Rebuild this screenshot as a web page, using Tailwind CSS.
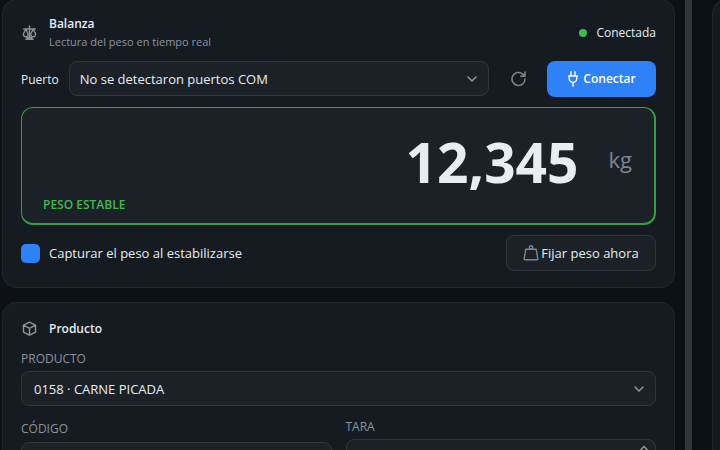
<!DOCTYPE html>
<html lang="es">
<head>
    <meta charset="UTF-8">
    <meta name="viewport" content="width=device-width, initial-scale=1.0">
    <title>Balanza</title>
    <script src="https://cdn.jsdelivr.net/npm/@tailwindcss/browser@4"></script>
</head>
<body class="bg-[#0d1117] text-[#e6edf3] font-['Open_Sans','Noto_Sans',sans-serif] text-[13px] leading-[18px]">
    <div class="flex h-screen overflow-hidden">
        <!-- Main column -->
        <main class="flex-1 min-w-0 flex flex-col gap-3.5 pl-0.5 pr-2.5 -mt-px">
            <!-- Balanza -->
            <section class="shrink-0 flex flex-col bg-[#161b22] border border-[#21262d] rounded-[14px] px-[18px] pt-[15px] pb-4">
                <header class="flex items-center justify-between">
                    <div class="flex items-center gap-3">
                        <svg class="size-4 text-[#8b949e]" viewBox="0 0 16 16" fill="none" stroke="currentColor" stroke-width="1.4" stroke-linecap="round" stroke-linejoin="round">
                            <path d="M8.5 1v12M2.8 4h11.4M5 14.2h7M6 13l2.5-1.2L11 13"/>
                            <path d="M4.8 4.2 2.5 8.6c-.4 2 .8 3.2 2.3 3.2s2.7-1.200 2.300-3.200zM12.200 4.200 9.900 8.600c-.4 2 .8 3.200 2.300 3.200s2.700-1.200 2.300-3.200z"/>
                        </svg>
                        <div>
                            <h2 class="text-xs leading-[18px] font-semibold">Balanza</h2>
                            <p class="text-[11px] leading-[18px] text-[#8b949e]">Lectura del peso en tiempo real</p>
                        </div>
                    </div>
                    <div class="flex items-center gap-[9px]">
                        <span class="size-2 rounded-full bg-[#3fb950]"></span>
                        <span class="text-xs leading-[18px]">Conectada</span>
                    </div>
                </header>

                <div class="flex items-start mt-2.5">
                    <label for="port" class="mr-2.5 text-xs leading-[38px] h-9">Puerto</label>
                    <div class="relative flex-1">
                        <select id="port" class="block w-full h-[35px] appearance-none bg-[#1c2128] border border-[#30363d] rounded-lg pl-2.5 pr-8">
                            <option>No se detectaron puertos COM</option>
                        </select>
                        <svg class="absolute right-[11px] top-3 w-3 h-3 text-[#8b949e] pointer-events-none" viewBox="0 0 12 12" fill="none" stroke="currentColor" stroke-width="1.6" stroke-linecap="round" stroke-linejoin="round"><path d="M2 4l4 4 4-4"/></svg>
                    </div>
                    <button type="button" aria-label="Actualizar puertos" class="w-[58px] h-9 flex items-center justify-center text-[#7d8590]">
                        <svg class="size-4" viewBox="0 0 16 16" fill="none" stroke="currentColor" stroke-width="1.5" stroke-linecap="round" stroke-linejoin="round"><path d="M15 8A6.5 6.5 0 1 1 12.800 3.100L15 5M15 1v4.200h-4.200"/></svg>
                    </button>
                    <button type="button" class="w-[109px] h-9 flex items-center justify-center gap-1 rounded-lg bg-[#2f81f7] text-white text-xs font-semibold">
                        <svg class="w-3 h-4" viewBox="0 0 12 16" fill="none" stroke="currentColor" stroke-width="1.4" stroke-linecap="round" stroke-linejoin="round"><path d="M4 .8v4M8 .8v4M1.500 5h9M2.300 5v2.700a3.700 3.700 0 0 0 7.400 0V5M6 11.500v3.800"/></svg>
                        Conectar
                    </button>
                </div>

                <!-- Weight display -->
                <div class="mt-2.5 h-[118px] flex flex-col bg-[#1c2128] border-t border-l border-r-2 border-b-2 border-[#369d46] rounded-xl px-[21px] pb-[9px]">
                    <div class="flex-1 flex items-center justify-end gap-[30px] pt-5">
                        <output class="text-[55px] leading-[64px] font-bold">12,345</output>
                        <span class="text-[22px] leading-7 pb-1.5 pr-px text-[#7d8590]">kg</span>
                    </div>
                    <p class="text-xs leading-[18px] font-semibold text-[#3fb950]">PESO ESTABLE</p>
                </div>

                <div class="flex items-center justify-between mt-2.5">
                    <label class="flex items-center gap-[9px]">
                        <input type="checkbox" checked class="appearance-none size-[19px] rounded-[5px] bg-[#2f81f7]">
                        Capturar el peso al estabilizarse
                    </label>
                    <button type="button" class="w-[150px] h-9 flex items-center justify-center gap-0.5 bg-[#1c2128] border border-[#30363d] rounded-lg">
                        <svg class="size-4 text-[#7d8590]" viewBox="0 0 16 16" fill="none" stroke="currentColor" stroke-width="1.4" stroke-linejoin="round"><circle cx="8" cy="2.4" r="1.7"/><path d="M2.800 4.300h10.400l1.600 9.400q.1 1-.9 1H2.100q-1 0-.9-1z"/></svg>
                        Fijar peso ahora
                    </button>
                </div>
            </section>

            <!-- Producto -->
            <section class="shrink-0 flex flex-col bg-[#161b22] border border-[#21262d] rounded-[14px] px-[18px] pt-[15px] pb-4">
                <header class="flex items-center gap-3 h-[22px]">
                    <svg class="size-4 text-[#8b949e]" viewBox="0 0 16 16" fill="none" stroke="currentColor" stroke-width="1.4" stroke-linejoin="round"><path d="M8.500 1.200l6 3v7l-6 3-6-3v-7zM2.500 4.200l6 3.200 6-3.200M8.500 7.400v6.800"/></svg>
                    <h2 class="text-xs leading-[18px] font-semibold">Producto</h2>
                </header>

                <label for="product" class="mt-2.5 text-xs leading-[18px] text-[#8b949e]">PRODUCTO</label>
                <div class="relative mt-[3px]">
                    <select id="product" class="block w-full h-[35px] appearance-none bg-[#1c2128] border border-[#30363d] rounded-lg pl-3 pr-8">
                        <option>0158 · CARNE PICADA</option>
                    </select>
                    <svg class="absolute right-[11px] top-3 w-3 h-3 text-[#8b949e] pointer-events-none" viewBox="0 0 12 12" fill="none" stroke="currentColor" stroke-width="1.6" stroke-linecap="round" stroke-linejoin="round"><path d="M2 4l4 4 4-4"/></svg>
                </div>

                <div class="grid grid-cols-2 items-center gap-3.5 mt-3">
                    <div class="flex flex-col gap-1">
                        <label for="code" class="text-xs leading-[18px] text-[#8b949e]">CÓDIGO</label>
                        <input id="code" type="text" class="h-9 w-full bg-[#1c2128] border border-[#30363d] rounded-lg px-3">
                    </div>
                    <div class="flex flex-col gap-[3px]">
                        <label for="tare" class="text-xs leading-[18px] text-[#8b949e]">TARA</label>
                        <div class="relative">
                            <input id="tare" type="text" inputmode="decimal" class="block h-[41px] w-full bg-[#1c2128] border border-[#30363d] rounded-lg px-3">
                            <svg class="absolute right-1.5 top-1.5 w-3 h-7 text-[#8b949e] pointer-events-none" viewBox="0 0 12 28" fill="none" stroke="currentColor" stroke-width="1.6" stroke-linecap="round" stroke-linejoin="round"><path d="M3 4.500l3-3 3 3M3 23.500l3 3 3-3"/></svg>
                        </div>
                    </div>
                </div>
            </section>
        </main>

        <!-- Splitter -->
        <div role="separator" class="w-[7px] bg-[#30363d]"></div>

        <!-- Side panel -->
        <aside class="w-7 pl-5 -mt-px overflow-hidden">
            <div class="w-80 h-full min-h-[480px] bg-[#161b22] border border-[#21262d] rounded-[14px]"></div>
        </aside>
    </div>
</body>
</html>
